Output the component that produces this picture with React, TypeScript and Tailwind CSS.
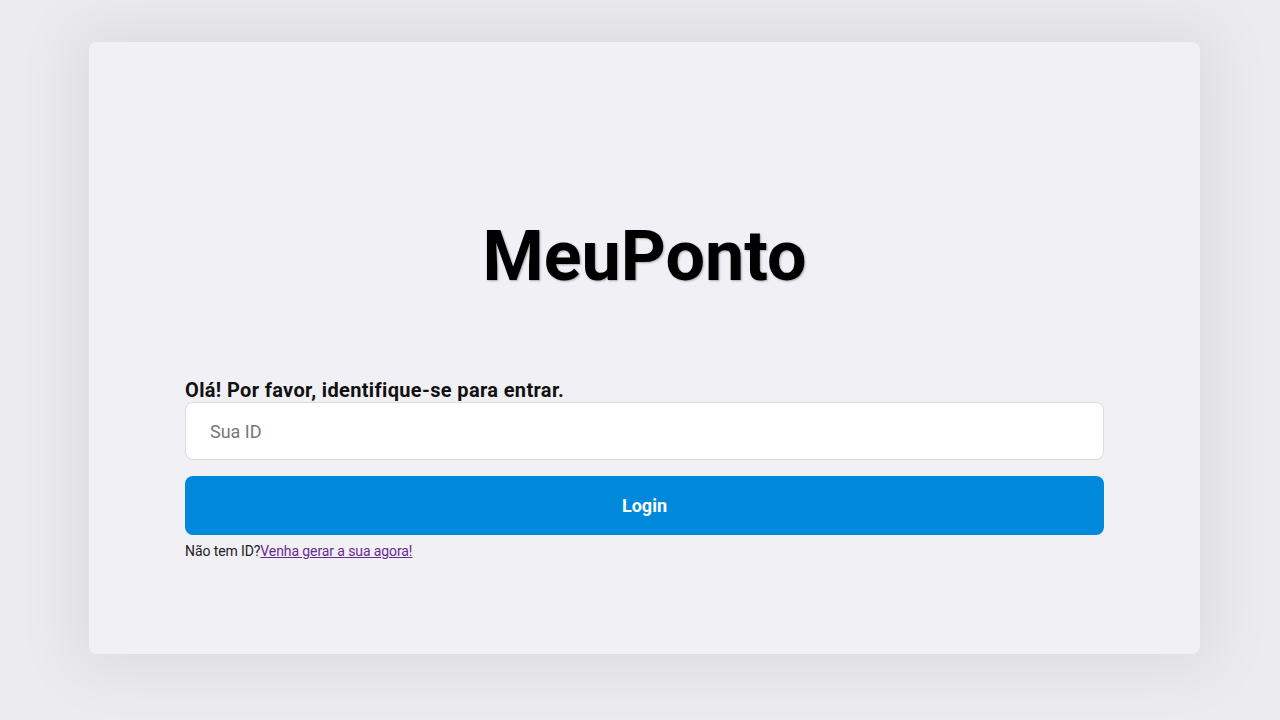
import React from 'react';

export default function App() {
  return (
    <div className="min-h-screen w-full bg-[#ececf0] pt-[42px] font-['Roboto',sans-serif]">
      <div className="ml-[89px] flex h-[612px] w-[1111px] flex-col rounded-lg bg-[#f0f0f5] px-[96px] shadow-[0_0_60px_20px_rgba(0,0,0,0.06)]">
        <h1 className="mt-[179px] text-center text-[70px] font-bold leading-none text-black [text-shadow:1px_1px_2px_rgba(0,0,0,0.3)]">
          MeuPonto
        </h1>
        <form className="mt-[87px] flex flex-col" onSubmit={(e) => e.preventDefault()}>
          <label htmlFor="id" className="text-[20px] font-bold leading-6 tracking-[0.35px] text-[#111]">
            Olá! Por favor, identifique-se para entrar.
          </label>
          <input
            id="id"
            placeholder="Sua ID"
            className="h-[58px] w-full rounded-lg border border-[#dcdce0] bg-white px-6 text-[18px] text-black outline-none placeholder:text-[#777]"
          />
          <button
            type="submit"
            className="mt-4 h-[59px] w-full rounded-lg bg-[#0088da] text-[18px] font-bold text-white"
          >
            Login
          </button>
          <p className="mt-2 text-[14px] leading-4 tracking-[-0.1px] text-[#222]">
            Não tem ID?
            <a href="#" className="text-[#6b2a92] underline">
              Venha gerar a sua agora!
            </a>
          </p>
        </form>
      </div>
    </div>
  );
}
